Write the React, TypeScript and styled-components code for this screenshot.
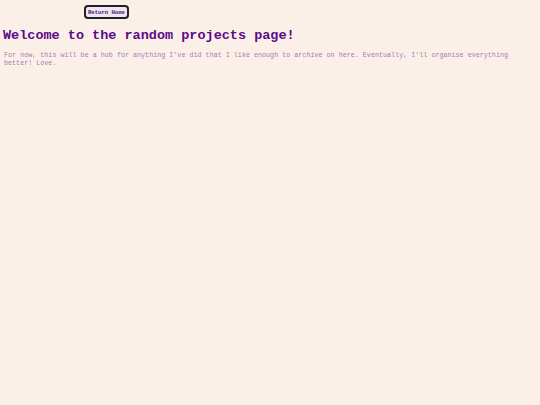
import React from 'react';
import styled, { createGlobalStyle } from 'styled-components';

const GlobalStyle = createGlobalStyle`
  html, body {
    margin: 0;
    padding: 0;
    background: #fbf0e8;
  }
  body {
    font-family: "Courier New", "Liberation Mono", monospace;
  }
`;

const Page = styled.div`
  min-height: 405px;
  padding: 0 3px;
  display: flex;
  flex-direction: column;
`;

const Nav = styled.nav`
  display: flex;
  padding: 5px 0 0 81px;
`;

const HomeButton = styled.button`
  font-family: "Courier New", "Liberation Mono", monospace;
  font-weight: bold;
  font-size: 5.6px;
  color: #3d1a6e;
  background: #eee6f2;
  border: 2px solid #222;
  border-radius: 4px;
  height: 14px;
  padding: 0 2px;
  cursor: pointer;
`;

const Title = styled.h1`
  margin: 8px 0 0 0;
  font-size: 13.5px;
  line-height: 17px;
  font-weight: bold;
  color: #5b0b8c;
`;

const Blurb = styled.p`
  margin: 7px 0 0 1px;
  max-width: 520px;
  font-size: 6.73px;
  line-height: 8px;
  color: #a87ab4;
`;

export default function App() {
  return (
    <>
      <GlobalStyle />
      <Page>
        <Nav>
          <HomeButton>Return Home</HomeButton>
        </Nav>
        <Title>Welcome to the random projects page!</Title>
        <Blurb>
          For now, this will be a hub for anything I've did that I like enough to archive on here.
          Eventually, I'll organise everything better! Love.
        </Blurb>
      </Page>
    </>
  );
}
